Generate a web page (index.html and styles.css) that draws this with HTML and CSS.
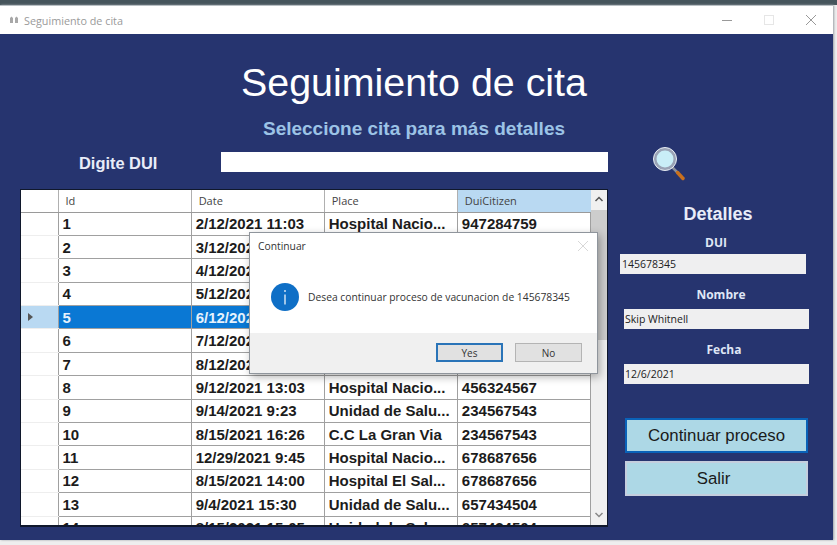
FILE: index.html
```html
<!DOCTYPE html>
<html>

<head>
    <title>Seguimiento de cita</title>
    <link rel="stylesheet" href="styles.css">
</head>

<body>
    <div class="window">
        <div class="titlebar">
            <div class="title-left">
                <svg class="app-icon" width="10" height="10" viewBox="0 0 10 10">
                    <path d="M1 8V3L2.500 1.500 4 3v5zM6 8V3l1.500-1.500L9 3v5z" fill="#a8a8a8" />
                </svg>
                <span>Seguimiento de cita</span>
            </div>
            <div class="win-buttons">
                <svg width="12" height="12" viewBox="0 0 12 12">
                    <path d="M1 6.500h10" stroke="#999" />
                </svg>
                <svg width="12" height="12" viewBox="0 0 12 12">
                    <rect x="1.500" y="1.500" width="9" height="9" fill="none" stroke="#e6e6e6" />
                </svg>
                <svg width="12" height="12" viewBox="0 0 12 12">
                    <path d="M1 1l10 10M11 1L1 11" stroke="#999" />
                </svg>
            </div>
        </div>

        <div class="content">
            <h1>Seguimiento de cita</h1>
            <h2>Seleccione cita para más detalles</h2>

            <div class="search-row">
                <label class="search-label">Digite DUI</label>
                <input class="search-input" type="text">
                <svg class="search-icon" width="36" height="37" viewBox="0 0 36 37">
                    <path d="M20 23l6 6" stroke="#8a8f9c" stroke-width="2.500" />
                    <path d="M25.500 28.500l5.500 6" stroke="#c8701e" stroke-width="3.500" stroke-linecap="round" />
                    <circle cx="13" cy="15" r="10" fill="#c9eef7" stroke="#9aa3b5" stroke-width="3" />
                    <circle cx="13" cy="15" r="11.500" fill="none" stroke="#e8eef5" />
                </svg>
            </div>

            <div class="main-row">
                <div class="grid-box">
                    <table class="grid">
                        <thead>
                            <tr>
                                <th class="row-head"></th>
                                <th>Id</th>
                                <th>Date</th>
                                <th>Place</th>
                                <th class="sorted">DuiCitizen</th>
                            </tr>
                        </thead>
                        <tbody>
                            <tr><td class="row-head"></td><td>1</td><td>2/12/2021 11:03</td><td>Hospital Nacio...</td><td>947284759</td></tr>
                            <tr><td class="row-head"></td><td>2</td><td>3/12/2021 11:03</td><td>Hospital Nacio...</td><td>947284759</td></tr>
                            <tr><td class="row-head"></td><td>3</td><td>4/12/2021 11:03</td><td>Hospital Nacio...</td><td>947284759</td></tr>
                            <tr><td class="row-head"></td><td>4</td><td>5/12/2021 11:03</td><td>Hospital Nacio...</td><td>947284759</td></tr>
                            <tr class="selected"><td class="row-head"><span class="arrow"></span></td><td>5</td><td>6/12/2021 11:03</td><td>Hospital Nacio...</td><td>145678345</td></tr>
                            <tr><td class="row-head"></td><td>6</td><td>7/12/2021 11:03</td><td>Hospital Nacio...</td><td>947284759</td></tr>
                            <tr><td class="row-head"></td><td>7</td><td>8/12/2021 11:03</td><td>Hospital Nacio...</td><td>947284759</td></tr>
                            <tr><td class="row-head"></td><td>8</td><td>9/12/2021 13:03</td><td>Hospital Nacio...</td><td>456324567</td></tr>
                            <tr><td class="row-head"></td><td>9</td><td>9/14/2021 9:23</td><td>Unidad de Salu...</td><td>234567543</td></tr>
                            <tr><td class="row-head"></td><td>10</td><td>8/15/2021 16:26</td><td>C.C La Gran Via</td><td>234567543</td></tr>
                            <tr><td class="row-head"></td><td>11</td><td>12/29/2021 9:45</td><td>Hospital Nacio...</td><td>678687656</td></tr>
                            <tr><td class="row-head"></td><td>12</td><td>8/15/2021 14:00</td><td>Hospital El Sal...</td><td>678687656</td></tr>
                            <tr><td class="row-head"></td><td>13</td><td>9/4/2021 15:30</td><td>Unidad de Salu...</td><td>657434504</td></tr>
                            <tr><td class="row-head"></td><td>14</td><td>8/15/2021 15:05</td><td>Unidad de Salu...</td><td>657434504</td></tr>
                        </tbody>
                    </table>
                    <div class="scrollbar">
                        <svg width="16" height="20" viewBox="0 0 16 20">
                            <path d="M4.500 11l3.500-3.500 3.500 3.500" fill="none" stroke="#555" stroke-width="1.500" />
                        </svg>
                        <div class="scroll-thumb"></div>
                        <svg class="scroll-down" width="16" height="20" viewBox="0 0 16 20">
                            <path d="M4.500 8l3.500 3.500 3.500-3.500" fill="none" stroke="#888" stroke-width="1.500" />
                        </svg>
                    </div>
                </div>

                <div class="details">
                    <h3>Detalles</h3>
                    <div class="field field-dui">
                        <label>DUI</label>
                        <input type="text" value="145678345" readonly>
                    </div>
                    <div class="field field-nombre">
                        <label>Nombre</label>
                        <input type="text" value="Skip Whitnell" readonly>
                    </div>
                    <div class="field field-fecha">
                        <label>Fecha</label>
                        <input type="text" value="12/6/2021" readonly>
                    </div>
                    <div class="actions">
                        <button type="button" class="action action-focus">Continuar proceso</button>
                        <button type="button" class="action action-exit">Salir</button>
                    </div>
                </div>
            </div>
        </div>

        <!-- message box over the form -->
        <div class="dialog">
            <div class="dialog-body">
                <div class="dialog-title">
                    <span>Continuar</span>
                    <svg width="12" height="12" viewBox="0 0 12 12">
                        <path d="M1 1l10 10M11 1L1 11" stroke="#d8d8d8" />
                    </svg>
                </div>
                <div class="dialog-message">
                    <svg width="28" height="28" viewBox="0 0 28 28">
                        <circle cx="14" cy="14" r="14" fill="#0f6fc6" />
                        <path d="M14 11.500v10M14 7v2" stroke="#fff" stroke-width="1.200" />
                    </svg>
                    <span>Desea continuar proceso de vacunacion de 145678345</span>
                </div>
            </div>
            <div class="dialog-footer">
                <button type="button" class="dialog-btn dialog-btn-focus">Yes</button>
                <button type="button" class="dialog-btn">No</button>
            </div>
        </div>
    </div>
</body>

</html>
```

FILE: styles.css
```css
* {
    box-sizing: border-box;
}

html,
body {
    height: 100%;
}

body {
    margin: 0;
    padding-top: 5px;
    padding-right: 4px;
    padding-bottom: 5px;
    background: linear-gradient(#46555c 0, #46555c 5px, #eeeeee 5px);
    font-family: 'Liberation Sans', Arial, sans-serif;
    overflow: hidden;
}

.window {
    position: relative;
    height: 100%;
    display: flex;
    flex-direction: column;
    box-shadow: 1px 0 2px #9aa0a6;
}

.titlebar {
    height: 29px;
    padding: 0 16px 0 9px;
    display: flex;
    align-items: center;
    justify-content: space-between;
    background-color: #fff;
    border-top: 1px solid #b9c0c4;
}

.title-left {
    display: flex;
    align-items: center;
    gap: 5px;
    font-family: 'Open Sans', sans-serif;
    font-size: 10.800px;
    color: #9a9a9a;
}

.win-buttons {
    display: flex;
    gap: 30px;
}

.content {
    flex: 1;
    padding: 30px 25px 0 20px;
    background-color: #26346f;
}

h1 {
    margin: 0;
    font-size: 39.400px;
    font-weight: normal;
    line-height: 36px;
    color: #fff;
    text-align: center;
}

h2 {
    margin: 19px 0 0;
    font-size: 19px;
    font-weight: bold;
    line-height: 20px;
    color: #9cc3e6;
    text-align: center;
}

.search-row {
    height: 38px;
    margin-top: 4px;
    display: flex;
    align-items: center;
}

.search-label {
    width: 201px;
    padding-top: 3px;
    padding-left: 59px;
    font-size: 16.400px;
    font-weight: bold;
    color: #e8ecf8;
}

.search-input {
    width: 387px;
    height: 20px;
    padding: 0;
    border: none;
    background-color: #fff;
}

.search-icon {
    margin-left: 44px;
}

.main-row {
    margin-top: 8px;
    display: flex;
    align-items: flex-start;
}

.grid-box {
    position: relative;
    flex: none;
    width: 588px;
    height: 338px;
    padding-right: 16px;
    background-color: #fff;
    border: 1px solid #10182c;
    border-bottom-width: 2px;
    overflow: hidden;
}

.grid {
    width: 570px;
    table-layout: fixed;
    border-collapse: collapse;
    font-size: 15px;
    font-weight: bold;
    color: #1c1c1c;
}

.grid th {
    width: 133px;
    height: 22px;
    padding: 0 0 0 7px;
    font-family: 'Open Sans', sans-serif;
    font-size: 11px;
    font-weight: normal;
    color: #444;
    text-align: left;
    background-color: #fff;
    border-right: 1px solid #b0b0b0;
    border-bottom: 1px solid #9a9a9a;
}

.grid th.row-head {
    width: 37px;
}

.grid th.sorted {
    background-color: #b9d9f2;
    border-right: none;
}

.grid td {
    height: 23.400px;
    padding: 0 0 0 4px;
    white-space: nowrap;
    overflow: hidden;
    border-right: 1px solid #a0a0a0;
    border-bottom: 1px solid #a0a0a0;
}

.grid td.row-head {
    border-bottom: 1px solid #eee;
    padding: 0 0 0 7px;
}

.selected td {
    background-color: #0a78d4;
    color: #e6f2fc;
}

.selected td.row-head {
    background-color: #b9d9f2;
}

.arrow {
    display: block;
    width: 0;
    height: 0;
    border-left: 5px solid #555;
    border-top: 4px solid transparent;
    border-bottom: 4px solid transparent;
}

.scrollbar {
    position: absolute;
    top: 0;
    right: 0;
    bottom: 0;
    width: 16px;
    display: flex;
    flex-direction: column;
    background-color: #f0f0f0;
}

.scroll-thumb {
    height: 130px;
    background-color: #cdcdcd;
}

.scroll-down {
    margin-top: auto;
}

.details {
    flex: none;
    width: 190px;
    margin-left: 12px;
    padding-top: 15px;
    display: flex;
    flex-direction: column;
    align-items: flex-start;
}

.details h3 {
    width: 100%;
    margin: 0;
    padding-left: 6px;
    font-size: 18px;
    line-height: 20px;
    color: #e8ecf8;
    text-align: center;
}

.field {
    width: 185px;
    margin: 13px 0 0 4px;
    display: flex;
    flex-direction: column;
}

.field label {
    margin-bottom: 6px;
    font-family: 'Open Sans', sans-serif;
    font-size: 12px;
    font-weight: bold;
    line-height: 16px;
    color: #dfe6f5;
    text-align: center;
}

.field input {
    height: 20px;
    padding: 0 1px;
    border: none;
    font-family: 'Open Sans', sans-serif;
    font-size: 10.500px;
    color: #222;
    background-color: #efeff0;
}

.field-dui {
    width: 186px;
    margin: 11px 0 0;
}

.field-dui label {
    margin-bottom: 3px;
    padding-left: 6px;
}

.field-dui input {
    padding: 0 2px;
}

.field-nombre label {
    padding-left: 9px;
}

.field-fecha label {
    padding-left: 15px;
}

.actions {
    width: 183px;
    margin: 34px 0 0 5px;
    display: flex;
    flex-direction: column;
    gap: 8px;
}

.action {
    height: 35px;
    padding: 0;
    border: 2px solid #c4cede;
    font-family: 'Liberation Sans', Arial, sans-serif;
    font-size: 16.800px;
    color: #1a1a1a;
    background-color: #add8e6;
}

.action-focus {
    border-color: #0a62b8;
}

.action-exit {
    padding-right: 6px;
}

.dialog {
    position: absolute;
    left: 249px;
    top: 227px;
    width: 349px;
    height: 142px;
    display: flex;
    flex-direction: column;
    background-color: #fff;
    border: 1px solid #8f959c;
    box-shadow: 2px 3px 8px rgba(0, 0, 0, 0.3);
    font-family: 'Open Sans', sans-serif;
    font-size: 10.300px;
    color: #333;
}

.dialog-body {
    flex: 1;
}

.dialog-title {
    height: 26px;
    padding: 0 8px;
    display: flex;
    align-items: center;
    justify-content: space-between;
}

.dialog-message {
    margin-top: 24px;
    padding-left: 21px;
    display: flex;
    align-items: center;
    gap: 9px;
}

.dialog-footer {
    height: 40px;
    padding: 10px 15px 0 0;
    display: flex;
    justify-content: flex-end;
    align-items: flex-start;
    gap: 12px;
    background-color: #f0f0f0;
}

.dialog-btn {
    width: 67px;
    height: 19px;
    padding: 0;
    border: 1px solid #b4b4b4;
    font-family: 'Open Sans', sans-serif;
    font-size: 10px;
    color: #333;
    background-color: #e1e1e1;
}

.dialog-btn-focus {
    border: 2px solid #2a74b8;
}
```
